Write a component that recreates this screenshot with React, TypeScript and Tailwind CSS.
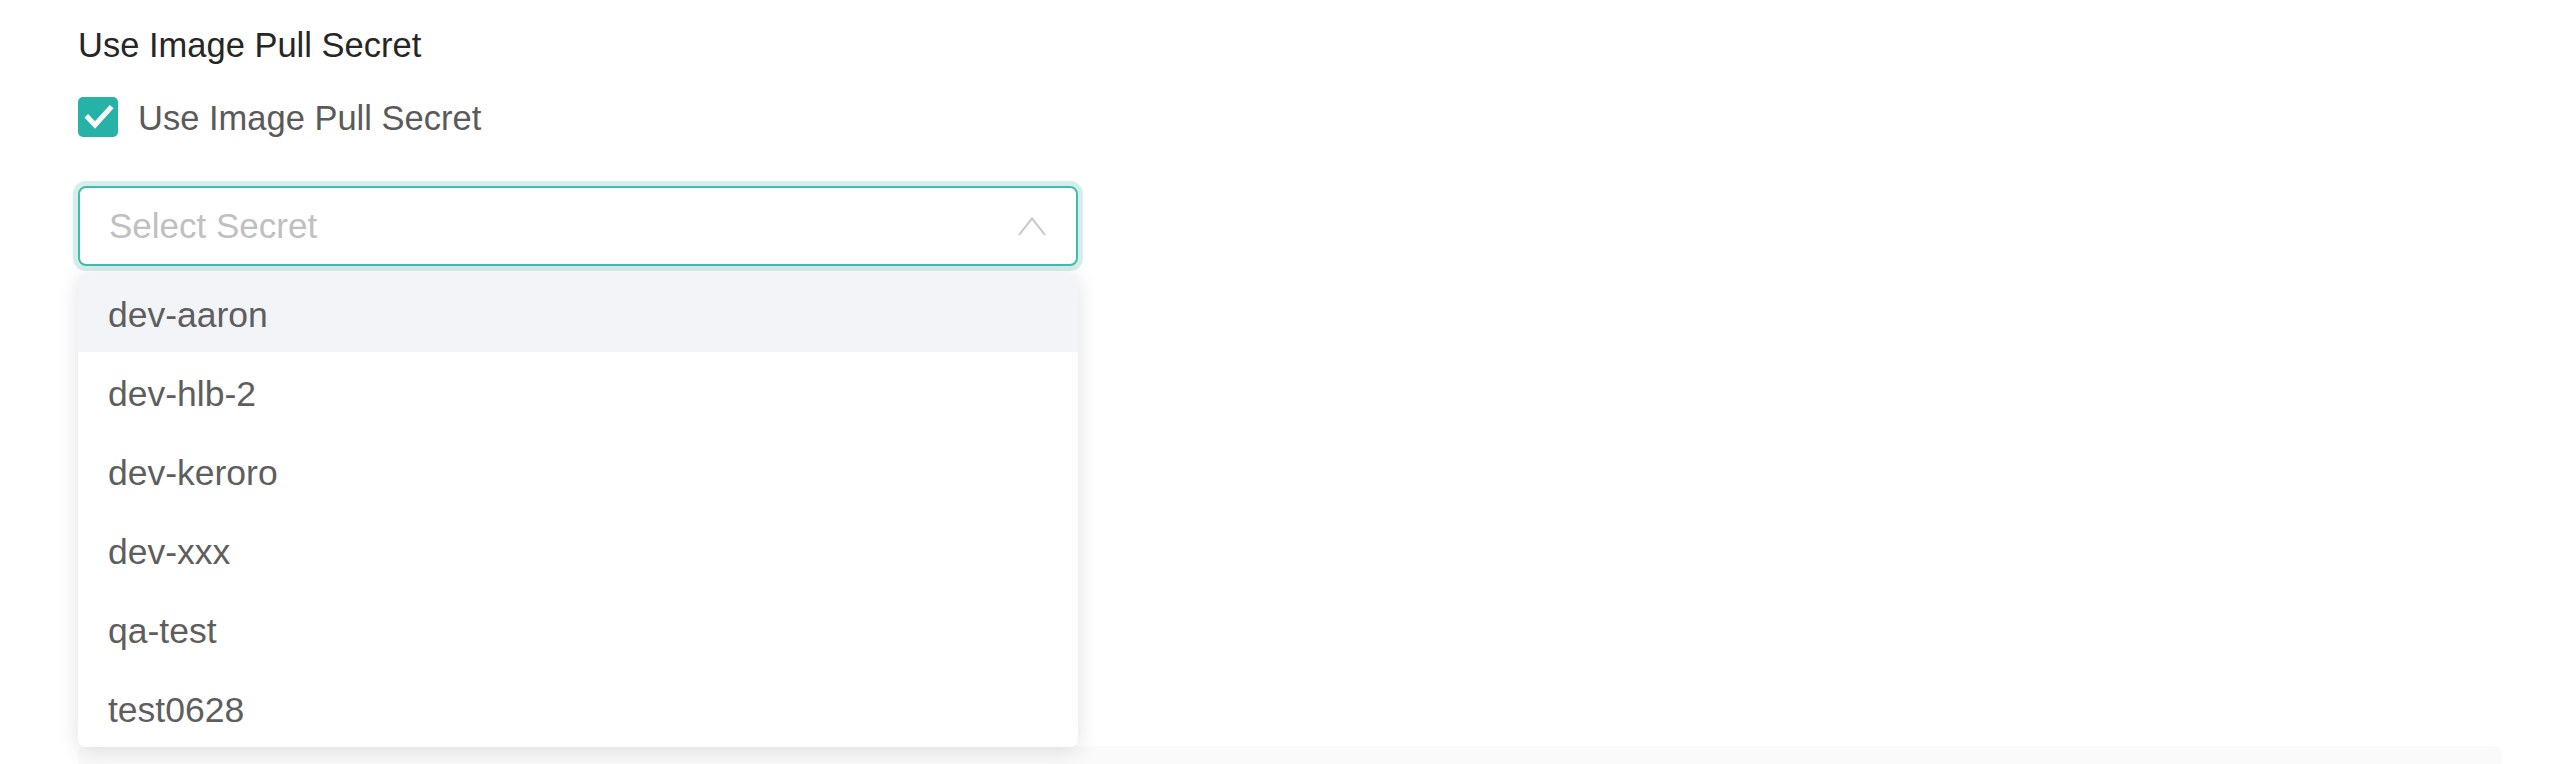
const secrets = ["dev-aaron", "dev-hlb-2", "dev-keroro", "dev-xxx", "qa-test", "test0628"];

export default function App() {
  const hovered = 0;

  return (
    <div
      className="min-h-[764px] bg-white pl-[78px] pt-[25px] overflow-hidden"
      style={{ fontFamily: "'Liberation Sans', Arial, sans-serif" }}
    >
      <div className="text-[34.5px] leading-[40px] text-[#262626]">Use Image Pull Secret</div>

      {/* checkbox row */}
      <label className="mt-[31px] flex items-center gap-[20px] w-fit">
        <span className="flex h-[40px] w-[40px] items-center justify-center rounded-[5px] bg-[#27b2a7]">
          <svg width="40" height="40" viewBox="0 0 40 40" fill="none">
            <path
              d="M10 20.5 L17 28 L32 11.5"
              stroke="white"
              strokeWidth="5"
              strokeLinecap="square"
              strokeLinejoin="miter"
            />
          </svg>
        </span>
        <span className="text-[34.5px] leading-[40px] text-[#5a5a5a] pt-[2px]">Use Image Pull Secret</span>
      </label>

      {/* select */}
      <div className="relative mt-[48px] w-[1000px]">
        <div className="flex h-[80px] items-center justify-between rounded-[8px] border-2 border-[#45bbad] bg-white pl-[29px] pr-[30px] shadow-[0_0_0_5px_#d4efeb]">
          <span className="text-[35px] leading-[40px] text-[#c0c0c0]">Select Secret</span>
          <svg width="28" height="19" viewBox="0 0 28 19" fill="none">
            <path d="M1 18 L14 1.5 L27 18" stroke="#c4c6cc" strokeWidth="2" />
          </svg>
        </div>

        {/* dropdown */}
        <div className="absolute left-0 top-[87px] z-10 w-[1000px] overflow-hidden rounded-[8px] bg-white shadow-[0_4px_22px_rgba(0,0,0,0.12)]">
          {secrets.map((s, i) => (
            <div
              key={s}
              className={
                "flex h-[79px] items-center pl-[30px] pt-[4px] text-[35.5px] leading-[40px] text-[#5e5e5e] " +
                (i === hovered ? "bg-[#f3f4f8]" : "bg-white")
              }
            >
              {s}
            </div>
          ))}
        </div>
      </div>

      {/* panel underneath */}
      <div className="mt-[480px] h-[40px] w-[2424px] rounded-t-[8px] bg-[#fafafa]" />
    </div>
  );
}
